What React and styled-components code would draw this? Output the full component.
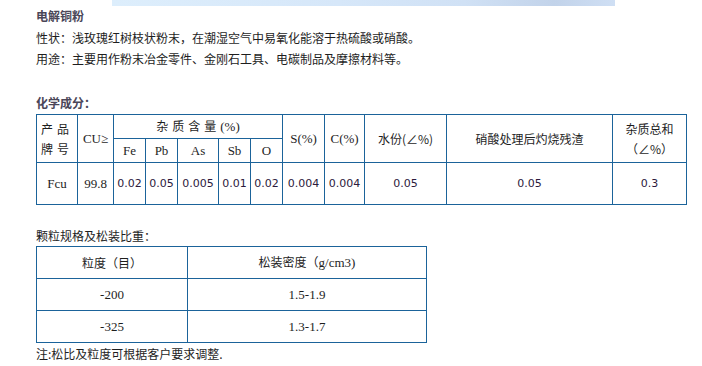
import React from 'react';
import styled, { createGlobalStyle } from 'styled-components';

const GlobalStyle = createGlobalStyle`
  html, body {
    margin: 0;
    padding: 0;
    background: #fff;
  }
  body {
    font-family: "Noto Sans CJK SC", "DejaVu Sans", sans-serif;
    font-size: 12px;
    color: #222;
  }
`;

const Page = styled.div`
  width: 702px;
  height: 366px;
  overflow: hidden;
  position: relative;
`;

const TopBanner = styled.div`
  margin-left: 112px;
  width: 503px;
  height: 6px;
  background: linear-gradient(90deg, #ddeefc 0%, #d6e7f9 45%, #d0e1f5 70%, #c2d3ea 88%, #cfdff4 100%);
`;

const Content = styled.div`
  padding-left: 36px;
`;

const Heading = styled.div`
  font-weight: bold;
  font-size: 12px;
  color: #4a4658;
  line-height: 20px;
  margin-top: ${p => p.$top || 0}px;
`;

const Line = styled.div`
  font-size: 12px;
  line-height: 21px;
  color: #1e1e1e;
  margin-top: ${p => p.$top || 0}px;
`;

const Table = styled.table`
  border-collapse: collapse;
  table-layout: fixed;
  width: ${p => p.$width}px;
  margin-top: ${p => p.$top || 0}px;
`;

const Cell = styled.td`
  border: 1px solid #1b639a;
  padding: 0;
  text-align: center;
  vertical-align: middle;
  height: ${p => p.$h}px;
  font-size: 12px;
  color: #1e1e1e;
  line-height: 20px;
  font-family: ${p =>
    p.$serif
      ? '"Liberation Serif", "Noto Sans CJK SC", serif'
      : p.$num
      ? '"DejaVu Sans", "Liberation Sans", sans-serif'
      : '"Noto Sans CJK SC", sans-serif'};
  ${p => p.$serif && 'font-size: 13px;'}
  ${p => p.$num && 'font-size: 11px; color: #2c1a3c;'}
`;

const Spaced = styled.span`
  letter-spacing: 4px;
`;

const Serif = styled.span`
  font-family: "Liberation Serif", serif;
  font-size: 13px;
  letter-spacing: 0;
`;

const mainCols = [41, 36, 32, 32, 41, 32, 32, 42, 40, 82, 166, 74];
const impurities = ['Fe', 'Pb', 'As', 'Sb', 'O'];
const values = ['0.02', '0.05', '0.005', '0.01', '0.02'];

const sizeRows = [
  ['-200', '1.5-1.9'],
  ['-325', '1.3-1.7'],
];

export default function App() {
  return (
    <Page>
      <GlobalStyle />
      <TopBanner />
      <Content>
        <Heading $top={0}>电解铜粉</Heading>
        <Line $top={1}>性状：浅玫瑰红树枝状粉末，在潮湿空气中易氧化能溶于热硫酸或硝酸。</Line>
        <Line>用途：主要用作粉末冶金零件、金刚石工具、电碳制品及摩擦材料等。</Line>
        <Heading $top={24}>化学成分：</Heading>
        <Table $width={650} $top={1}>
          <colgroup>
            {mainCols.map((w, i) => (
              <col key={i} style={{ width: w }} />
            ))}
          </colgroup>
          <tbody>
            <tr>
              <Cell rowSpan={2} $h={46}>
                <Spaced>产品</Spaced>
                <br />
                <Spaced>牌号</Spaced>
              </Cell>
              <Cell rowSpan={2} $serif>CU≥</Cell>
              <Cell colSpan={5} $h={23}>
                <Spaced>杂质含量</Spaced>
                <Serif>(%)</Serif>
              </Cell>
              <Cell rowSpan={2} $serif>S(%)</Cell>
              <Cell rowSpan={2} $serif>C(%)</Cell>
              <Cell rowSpan={2}>水份(∠%)</Cell>
              <Cell rowSpan={2}>硝酸处理后灼烧残渣</Cell>
              <Cell rowSpan={2}>
                杂质总和
                <br />
                （∠%）
              </Cell>
            </tr>
            <tr>
              {impurities.map(el => (
                <Cell key={el} $serif $h={23}>{el}</Cell>
              ))}
            </tr>
            <tr>
              <Cell $serif $h={41}>Fcu</Cell>
              <Cell $serif>99.8</Cell>
              {values.map((v, i) => (
                <Cell key={i} $num>{v}</Cell>
              ))}
              <Cell $num>0.004</Cell>
              <Cell $num>0.004</Cell>
              <Cell $num>0.05</Cell>
              <Cell $num>0.05</Cell>
              <Cell $num>0.3</Cell>
            </tr>
          </tbody>
        </Table>
        <Line $top={20}>颗粒规格及松装比重：</Line>
        <Table $width={390} $top={0}>
          <colgroup>
            <col style={{ width: 151 }} />
            <col style={{ width: 239 }} />
          </colgroup>
          <tbody>
            <tr>
              <Cell $h={31}>粒度（目）</Cell>
              <Cell>
                松装密度（<Serif>g/cm3)</Serif>
              </Cell>
            </tr>
            {sizeRows.map(([mesh, density]) => (
              <tr key={mesh}>
                <Cell $serif $h={31}>{mesh}</Cell>
                <Cell $serif>{density}</Cell>
              </tr>
            ))}
          </tbody>
        </Table>
        <Line>注:松比及粒度可根据客户要求调整.</Line>
      </Content>
    </Page>
  );
}
